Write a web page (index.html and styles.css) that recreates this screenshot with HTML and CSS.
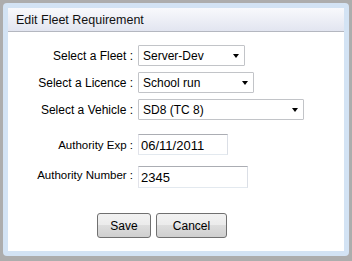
FILE: index.html
```html
<!DOCTYPE html>
<html lang="en">
<head>
    <meta charset="UTF-8">
    <title>Edit Fleet Requirement</title>
    <link rel="stylesheet" href="styles.css">
</head>
<body>
    <div class="dialog">
        <div class="panel">
            <div class="panel-header">Edit Fleet Requirement</div>
            <form class="fleet-form">
                <div class="form-row">
                    <label for="fleet">Select a Fleet :</label>
                    <span class="select-wrap fleet">
                        <select id="fleet"><option>Server-Dev</option></select>
                    </span>
                </div>
                <div class="form-row">
                    <label for="licence">Select a Licence :</label>
                    <span class="select-wrap licence">
                        <select id="licence"><option>School run</option></select>
                    </span>
                </div>
                <div class="form-row">
                    <label for="vehicle">Select a Vehicle :</label>
                    <span class="select-wrap vehicle">
                        <select id="vehicle"><option>SD8 (TC 8)</option></select>
                    </span>
                </div>
                <div class="form-row text-row first-text">
                    <label for="auth-exp">Authority Exp :</label>
                    <input type="text" id="auth-exp" class="auth-exp" value="06/11/2011">
                </div>
                <div class="form-row text-row second-text">
                    <label for="auth-number">Authority Number :</label>
                    <input type="text" id="auth-number" class="auth-number" value="2345">
                </div>
                <div class="buttons">
                    <button type="button" class="btn-save">Save</button>
                    <button type="button" class="btn-cancel">Cancel</button>
                </div>
            </form>
        </div>
    </div>
</body>
</html>
```

FILE: styles.css
```css
/* General Styles */
body {
    margin: 0;
    padding: 3px 3px 5px 3px;
    background-color: #adadad;
    font-family: "Liberation Sans", Arial, sans-serif;
    font-size: 12px;
    color: #000;
}

.dialog {
    width: 346px;
    height: 253px;
    box-sizing: border-box;
    padding: 5px;
    background-color: #d3e3f4;
    border-radius: 4px;
}

.panel {
    height: 100%;
    background-color: #ffffff;
}

.panel-header {
    height: 23px;
    line-height: 24px;
    padding-left: 8px;
    font-size: 12.5px;
    color: #111;
    background: linear-gradient(#f8f9fc, #e2e5f0);
    border-bottom: 1px solid #b4b7c0;
}

/* Form Styles */
.fleet-form {
    padding-top: 13px;
}

.form-row {
    display: flex;
    align-items: center;
    height: 21px;
    margin-bottom: 6px;
}

.form-row label {
    width: 125px;
    margin-right: 5px;
    text-align: right;
}

.text-row {
    align-items: flex-start;
    margin-bottom: 11px;
}

.text-row label {
    line-height: 16px;
    font-size: 11.5px;
}

.first-text {
    margin-top: 14px;
}

.first-text label {
    padding-top: 3px;
}

.second-text {
    height: 22px;
}

.second-text label {
    padding-top: 1px;
}

.select-wrap {
    position: relative;
    display: block;
    height: 21px;
}

.select-wrap select {
    appearance: none;
    -webkit-appearance: none;
    width: 100%;
    height: 21px;
    margin: 0;
    padding: 0 0 0 4px;
    border: 1px solid #c2c4c8;
    border-radius: 1px;
    background-color: #fff;
    font-family: inherit;
    font-size: 12px;
    color: #000;
}

/* the little dropdown arrow */
.select-wrap::after {
    content: "";
    position: absolute;
    right: 6px;
    top: 9px;
    border-left: 3.5px solid transparent;
    border-right: 3.5px solid transparent;
    border-top: 4px solid #000;
    pointer-events: none;
}

.fleet { width: 107px; }
.licence { width: 116px; }
.vehicle { width: 166px; }

input[type="text"] {
    height: 21px;
    box-sizing: border-box;
    margin: 0;
    padding: 1px 2px 0 2px;
    border: 1px solid;
    border-color: #abadb3 #dbdfe6 #e3e9ef #e2e3ea;
    font-family: inherit;
    font-size: 13px;
    color: #000;
}

.auth-exp { width: 90px; }
.auth-number { width: 110px; height: 22px !important; }

.buttons {
    display: flex;
    gap: 5px;
    padding-left: 89px;
    margin-top: 25px;
}

.buttons button {
    height: 25px;
    padding: 0;
    border: 1px solid #707070;
    border-radius: 3px;
    background: linear-gradient(#f2f2f2 0%, #ebebeb 50%, #dddddd 50%, #cfcfcf 100%);
    font-family: inherit;
    font-size: 12px;
    color: #000;
}

.btn-save { width: 54px; }
.btn-cancel { width: 71px; }
```
